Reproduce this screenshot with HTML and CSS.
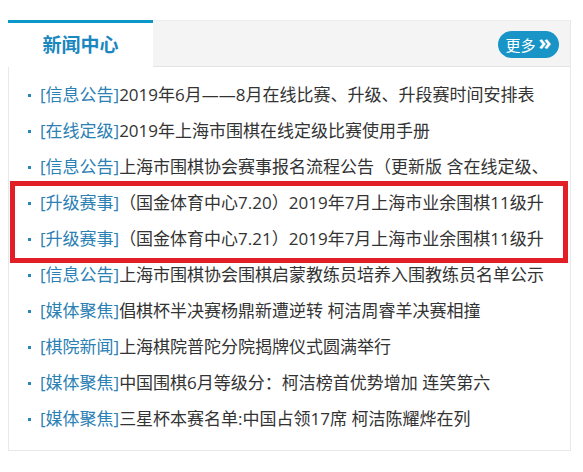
FILE: index.html
```html
<!DOCTYPE html>
<html lang="zh-CN">
<head>
<meta charset="utf-8">
<link rel="stylesheet" href="styles.css">
</head>
<body>
<div class="panel">
  <div class="head">
    <div class="tab">新闻中心</div>
    <a class="more">更多<span class="arr">&#187;</span></a>
  </div>
  <ul class="list">
    <li><span class="cat">[信息公告]</span>2019年6月——8月在线比赛、升级、升段赛时间安排表</li>
    <li><span class="cat">[在线定级]</span>2019年上海市围棋在线定级比赛使用手册</li>
    <li><span class="cat">[信息公告]</span>上海市围棋协会赛事报名流程公告（更新版 含在线定级、</li>
    <li><span class="cat">[升级赛事]</span>（国金体育中心7.20）2019年7月上海市业余围棋11级升</li>
    <li><span class="cat">[升级赛事]</span>（国金体育中心7.21）2019年7月上海市业余围棋11级升</li>
    <li><span class="cat">[信息公告]</span>上海市围棋协会围棋启蒙教练员培养入围教练员名单公示</li>
    <li><span class="cat">[媒体聚焦]</span>倡棋杯半决赛杨鼎新遭逆转 柯洁周睿羊决赛相撞</li>
    <li><span class="cat">[棋院新闻]</span>上海棋院普陀分院揭牌仪式圆满举行</li>
    <li><span class="cat">[媒体聚焦]</span>中国围棋6月等级分：柯洁榜首优势增加 连笑第六</li>
    <li><span class="cat">[媒体聚焦]</span>三星杯本赛名单:中国占领17席 柯洁陈耀烨在列</li>
  </ul>
  <div class="mark"></div>
</div>
</body>
</html>
```

FILE: styles.css
```css
html, body { margin: 0; padding: 0; background: #fff; }
body {
  font-family: "Open Sans", "Noto Sans CJK SC", sans-serif;
  padding: 20px 0 0 8px;
}
.panel {
  position: relative;
  width: 563px;
  height: 431px;
  border: 1px solid #e8e8e8;
  border-top: none;
  box-sizing: border-box;
}
.head {
  height: 47px;
  background: #f4f4f4;
  border-bottom: 1px solid #e4e4e4;
  border-top: 1px solid #ececec;
  box-sizing: border-box;
  display: flex;
  align-items: center;
  justify-content: space-between;
  margin-left: -1px;
}
.tab {
  width: 145px;
  height: 47px;
  box-sizing: border-box;
  margin-top: -1px;
  border-top: 3px solid #0a98ca;
  background: #fff;
  color: #1a87bf;
  font-weight: bold;
  font-size: 19px;
  display: flex;
  align-items: center;
  justify-content: center;
  padding-bottom: 1px;
}
.more {
  margin-right: 11px;
  width: 61px;
  height: 27px;
  border-radius: 14px;
  background: #1895c6;
  color: #fff;
  font-size: 15px;
  display: flex;
  align-items: center;
  justify-content: center;
  gap: 3px;
  margin-top: 1px;
}
.arr { font-size: 21px; font-weight: bold; line-height: 1; margin-top: -3px; }
.list {
  list-style: none;
  margin: 0;
  padding: 10px 0 0 0;
}
.list li {
  position: relative;
  height: 36px;
  line-height: 36px;
  font-size: 17px;
  color: #333;
  white-space: nowrap;
  overflow: hidden;
  padding-left: 31px;
  width: 545px;
  box-sizing: border-box;
}
.list li::before {
  content: "";
  position: absolute;
  left: 19px;
  top: 17px;
  width: 3px;
  height: 3px;
  background: #2a87b8;
}
.cat { color: #2b80b4; }
.mark {
  position: absolute;
  left: 1px;
  top: 161px;
  width: 558px;
  height: 82px;
  border: 5px solid #e21e27;
  box-sizing: border-box;
}
```
